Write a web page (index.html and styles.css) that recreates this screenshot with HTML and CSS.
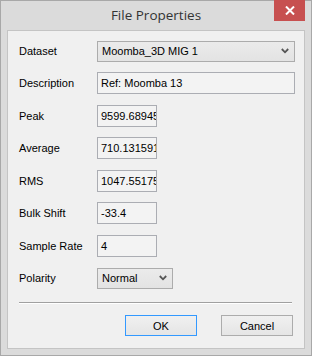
FILE: index.html
```html
<!DOCTYPE html>
<html lang="en">
<head>
    <meta charset="UTF-8">
    <meta name="viewport" content="width=device-width, initial-scale=1.0">
    <title>File Properties</title>
    <link rel="stylesheet" href="styles.css">
</head>
<body>
    <div class="window">
        <div class="titlebar">
            <span></span>
            <div class="title">File Properties</div>
            <button class="close" title="Close">
                <svg width="10" height="9" viewBox="0 0 10 9">
                    <path d="M1 0.5 L9 8.5 M9 0.5 L1 8.5" stroke="#fff" stroke-width="2"/>
                </svg>
            </button>
        </div>
        <div class="content">
            <div class="form">
                <label>Dataset</label>
                <div class="combo wide first">
                    <span>Moomba_3D MIG 1</span>
                    <svg width="8" height="6" viewBox="0 0 8 6"><path d="M0.8 1 L4 4.3 L7.2 1" fill="none" stroke="#555" stroke-width="1.8"/></svg>
                </div>

                <label>Description</label>
                <div class="field wide">Ref: Moomba 13</div>

                <label>Peak</label>
                <div class="field num">9599.68945</div>

                <label>Average</label>
                <div class="field num">710.131591</div>

                <label>RMS</label>
                <div class="field num">1047.55175</div>

                <label>Bulk Shift</label>
                <div class="field num">-33.4</div>

                <label>Sample Rate</label>
                <div class="field num">4</div>

                <label>Polarity</label>
                <div class="combo small">
                    <span>Normal</span>
                    <svg width="8" height="6" viewBox="0 0 8 6"><path d="M0.8 1 L4 4.3 L7.2 1" fill="none" stroke="#555" stroke-width="1.8"/></svg>
                </div>
            </div>
            <hr class="sep">
            <div class="buttons">
                <button class="btn default">OK</button>
                <button class="btn">Cancel</button>
            </div>
        </div>
    </div>
</body>
</html>
```
FILE: styles.css
```css
body {
    margin: 0;
    font-family: "Liberation Sans", Arial, sans-serif;
    font-size: 11px;
    color: #000;
    background: #fff;
}
.window {
    width: 312px;
    height: 356px;
    box-sizing: border-box;
    border: 1px solid #a8a8a8;
    background: #dbdbdb;
    display: flex;
    flex-direction: column;
}
.titlebar {
    height: 29px;
    display: grid;
    grid-template-columns: 1fr auto 1fr;
}
.title {
    font-family: "Open Sans", "Noto Sans", sans-serif;
    font-size: 13.5px;
    color: #333;
    line-height: 28px;
}
.close {
    justify-self: end;
    align-self: start;
    margin: -1px 6px 0 0;
    width: 31px;
    height: 21px;
    border: none;
    padding: 0;
    background: #c75050;
    display: flex;
    align-items: center;
    justify-content: center;
}
.content {
    flex: 1;
    margin: 0 6px 6px 6px;
    border: 1px solid #c4c4c4;
    background: #f0f0f0;
    padding: 8.5px 9px 0 11px;
    display: flex;
    flex-direction: column;
}
.form {
    display: grid;
    grid-template-columns: 78px 1fr;
    grid-auto-rows: 22px;
    row-gap: 10.5px;
    align-items: center;
}
.form label {
    white-space: nowrap;
}
.field {
    height: 22px;
    box-sizing: border-box;
    border: 1px solid #abadb3;
    background: #f3f3f3;
    padding: 0 0 0 3px;
    line-height: 20px;
    white-space: nowrap;
    overflow: hidden;
}
.field.num {
    width: 60px;
}
.combo {
    height: 21px;
    box-sizing: border-box;
    border: 1px solid #acacac;
    background: linear-gradient(#ebebeb, #e3e3e3);
    padding: 0 5px 0 4px;
    display: flex;
    align-items: center;
    justify-content: space-between;
    white-space: nowrap;
}
.combo.first {
    align-self: end;
    margin-bottom: 0;
}
.combo.small {
    width: 76px;
}
.sep {
    margin: 13px 3px 0 0;
    border: none;
    border-top: 1px solid #a0a0a0;
    border-bottom: 1px solid #fff;
    height: 0;
}
.buttons {
    margin: 11px 2px 0 0;
    display: flex;
    justify-content: flex-end;
    gap: 24px;
}
.btn {
    width: 72px;
    height: 21px;
    box-sizing: border-box;
    font-family: "Liberation Sans", Arial, sans-serif;
    font-size: 11px;
    color: #000;
    border: 1px solid #acacac;
    background: linear-gradient(#f0f0f0, #e5e5e5);
    padding: 0;
}
.btn.default {
    border-color: #3399ff;
}
```
